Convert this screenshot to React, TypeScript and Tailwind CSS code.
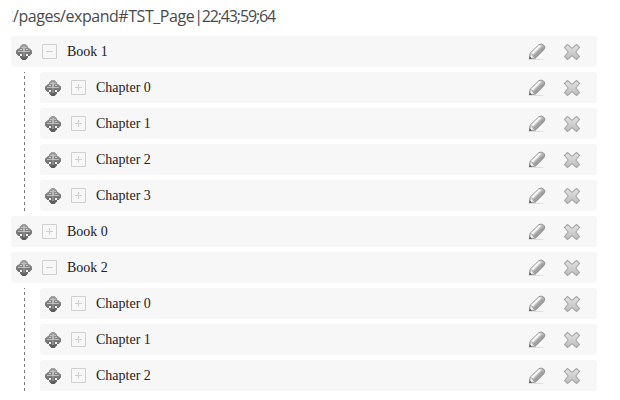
type RowData = { title: string; open?: boolean; children?: string[] };

const books: RowData[] = [
  { title: "Book 1", open: true, children: ["Chapter 0", "Chapter 1", "Chapter 2", "Chapter 3"] },
  { title: "Book 0" },
  { title: "Book 2", open: true, children: ["Chapter 0", "Chapter 1", "Chapter 2"] },
];

function MoveIcon() {
  return (
    <svg width="16" height="16" viewBox="0 0 16 16" className="shrink-0">
      <path
        d="M6.5 0h3L12 2.5V3.5L13 4L16 6.5v3L13.5 12H12v1.5L9.5 16h-3L4 13.5V12H2.5L0 9.5v-3L3 4L4 3.5V2.5z"
        fill="url(#moveFill)"
      />
      <path d="M4 5h2v1H4zM10 5h2v1h-2z" fill="#cfcfcf" />
      <path d="M4 10h2v2H4zM10 10h2v2h-2z" fill="#f2f2f2" />
      <path d="M7 2h2v5H7zM2 7h12v1H2zM5 3h6v1H5z" fill="#bdbdbd" />
      <path d="M7 8h2v5H7z" fill="#8c8c8c" />
    </svg>
  );
}

function PencilIcon() {
  return (
    <svg width="18" height="18" viewBox="0 0 18 18" className="shrink-0">
      <path d="M3 16.5h12" stroke="#dedede" strokeWidth="1" />
      <path d="M1.3 15.8L2.2 10.2 10.8 1.8Q13.3.2 15.6 2.1T16 6.6L7.5 15z" fill="url(#pencilFill)" stroke="#909090" strokeWidth="1" />
      <path d="M4 10.7l8-8" stroke="#f8f8f8" strokeWidth="2" />
      <path d="M6.3 13.6L15 4.9" stroke="#a0a0a0" strokeWidth="2" />
      <path d="M2.4 10.6l2 .8.4 1.7 2 1.7-5.1 1z" fill="#ededed" stroke="#999" strokeWidth=".6" />
      <path d="M1.2 16.2l.6-2.6 2 1.9z" fill="#555" />
    </svg>
  );
}

function DeleteIcon() {
  return (
    <svg width="18" height="18" viewBox="0 0 18 18" className="shrink-0">
      <path d="M4.5 1.5L9 5.3l4.5-3.8 3 3L12.8 9l3.7 4.5-3 3L9 12.7l-4.5 3.8-3-3L5.2 9 1.5 4.5z" fill="url(#crossFill)" stroke="#a8a8a8" strokeWidth="1.1" strokeLinejoin="round" />
    </svg>
  );
}

function Row({ title, open = false }: { title: string; open?: boolean }) {
  return (
    <div className="flex h-[31px] items-center rounded-[3px] bg-[#f7f7f7] pl-[5px] pr-4 text-[#222]">
      <MoveIcon />
      <svg width="15" height="15" viewBox="0 0 15 15" className="ml-[10px] shrink-0" fill="none" stroke="#d0d0d0">
        <path d="M.5.5h14v14H.5zM4 7.5h7" />
        {!open && <path d="M7.5 4v7" />}
      </svg>
      <span className="ml-[10px] grow text-[14px] leading-[31px]">{title}</span>
      <PencilIcon />
      <span className="w-[17px]" />
      <DeleteIcon />
    </div>
  );
}

export default function App() {
  return (
    <main className="h-[400px] w-[620px] overflow-hidden bg-white font-['Liberation_Serif',serif]">
      <svg width="0" height="0" className="absolute">
        <defs>
          <linearGradient id="moveFill" x1="0" y1="0" x2="0" y2="1">
            <stop stopColor="#a0a0a0" />
            <stop offset="1" stopColor="#585858" />
          </linearGradient>
          <linearGradient id="pencilFill" x1="0" y1="0" x2="1" y2="1">
            <stop offset=".3" stopColor="#eee" />
            <stop offset=".7" stopColor="#888" />
          </linearGradient>
          <linearGradient id="crossFill" x1="0" y1="0" x2="0" y2="1">
            <stop stopColor="#e5e5e5" />
            <stop offset="1" stopColor="#bbb" />
          </linearGradient>
        </defs>
      </svg>
      <header className="flex h-9 items-start pl-3 pt-[5px]">
        <span className="mt-[6px] flex h-[11px] w-px flex-col justify-between">
          <i className="h-[2px] bg-[#c5e5f7]" />
          <i className="h-[2px] bg-[#c5e5f7]" />
        </span>
        <h1 className="whitespace-nowrap font-['Open_Sans',sans-serif] text-[16px] leading-[22px] tracking-[-0.46px] text-[#4a4a4a]">
          /pages/expand#TST_Page<span className="tracking-[-1.15px]">|22;43;59;64</span>
        </h1>
      </header>
      <div className="ml-[11px] flex w-[586px] flex-col gap-[5px]">
        {books.map((book) => (
          <section key={book.title} className="flex flex-col gap-[5px]">
            <Row title={book.title} open={book.open} />
            {book.children && (
              <div className="flex pl-[13px]">
                <div className="w-px bg-[repeating-linear-gradient(to_bottom,#777_0_1px,transparent_1px_4px,#777_4px_6px)]" />
                <div className="ml-[15px] flex grow flex-col gap-[5px]">
                  {book.children.map((title) => (
                    <Row key={title} title={title} />
                  ))}
                </div>
              </div>
            )}
          </section>
        ))}
      </div>
    </main>
  );
}
